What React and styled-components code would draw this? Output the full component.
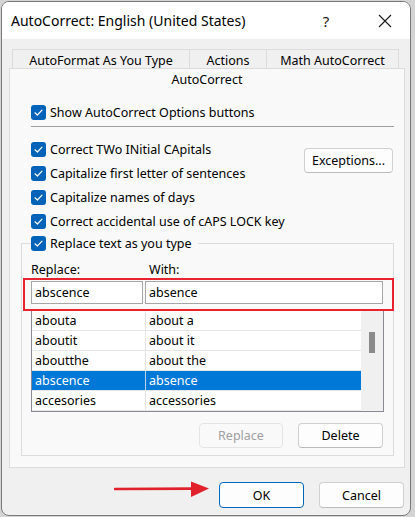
import React from 'react';
import styled, { createGlobalStyle } from 'styled-components';

const GlobalStyle = createGlobalStyle`
  html, body {
    margin: 0;
    padding: 0;
    background: #d4d4d4;
  }
  body {
    font-family: "Noto Sans", "Open Sans", sans-serif;
    font-size: 12.5px;
    color: #000;
  }
`;

const entries = [
  ['abouta', 'about a'],
  ['aboutit', 'about it'],
  ['aboutthe', 'about the'],
  ['abscence', 'absence', true],
  ['accesories', 'accessories'],
];

const options = [
  'Correct TWo INitial CApitals',
  'Capitalize first letter of sentences',
  'Capitalize names of days',
  'Correct accidental use of cAPS LOCK key',
];

const Check = ({ children }) => (
  <CheckRow>
    <Box>
      <svg width="11" height="11" viewBox="0 0 11 11" fill="none">
        <path d="M2 5.8 L4.4 8 L9 3.2" stroke="#fff" strokeWidth="1.2" strokeLinecap="round" strokeLinejoin="round" />
      </svg>
    </Box>
    <span>{children}</span>
  </CheckRow>
);

const App = () => {
  return (
    <>
      <GlobalStyle />
      <Window>
        <TitleBar>
          <Title>AutoCorrect: English (United States)</Title>
          <TitleButton>?</TitleButton>
          <TitleButton>
            <svg width="14" height="14" viewBox="0 0 14 14">
              <path d="M1 1 L13 13 M13 1 L1 13" stroke="#1a1a1a" strokeWidth="1.1" />
            </svg>
          </TitleButton>
        </TitleBar>

        <Body>
          <TabStrip>
            <Tab $w={178}>AutoFormat As You Type</Tab>
            <Tab $w={78}>Actions</Tab>
            <Tab $w={133}>Math AutoCorrect</Tab>
          </TabStrip>

          <Panel>
            <PanelHeader>AutoCorrect</PanelHeader>
            <PanelContent>
              <Check>Show AutoCorrect Options buttons</Check>
              <Separator />
              <OptionsRow>
                <div>
                  {options.map((o) => (
                    <Check key={o}>{o}</Check>
                  ))}
                </div>
                <Button $w={89} $mt={11}>Exceptions...</Button>
              </OptionsRow>

              <Group>
                <Legend>
                  <Check>Replace text as you type</Check>
                </Legend>
                <Labels>
                  <span>Replace:</span>
                  <span style={{ paddingLeft: 4 }}>With:</span>
                </Labels>
                <InputRow>
                  <Input>abscence</Input>
                  <Input>absence</Input>
                </InputRow>
                <List>
                  <Rows>
                    {entries.map(([a, b, sel]) => (
                      <Row key={a} $selected={sel}>
                        <Cell>{a}</Cell>
                        <Cell>{b}</Cell>
                      </Row>
                    ))}
                  </Rows>
                  <ScrollBar>
                    <Thumb />
                  </ScrollBar>
                </List>
                <GroupButtons>
                  <Button $w={84} disabled>Replace</Button>
                  <Button $w={85}>Delete</Button>
                </GroupButtons>
              </Group>
            </PanelContent>
          </Panel>

          <Footer>
            <Arrow width="96" height="20" viewBox="0 0 96 20">
              <path d="M1 9 L80 8.6" stroke="#e0202a" strokeWidth="2.6" strokeLinecap="round" />
              <path d="M77 1.5 L95 8.5 L77 17 Z" fill="#e0202a" />
            </Arrow>
            <Button $w={85} $h={26} $primary>OK</Button>
            <Button $w={85} $h={26}>Cancel</Button>
          </Footer>
        </Body>
      </Window>
    </>
  );
};

const Window = styled.div`
  box-sizing: border-box;
  margin: 1px 0 0 1px;
  width: 410px;
  height: 515px;
  border: 1px solid #7a7a7a;
  border-radius: 8px;
  overflow: hidden;
  background: #f0f0f0;
  display: flex;
  flex-direction: column;
`;

const TitleBar = styled.div`
  height: 37px;
  flex: none;
  background: #fff;
  display: flex;
  align-items: center;
  gap: 15px;
  padding: 0 3px 0 9px;
`;

const Title = styled.div`
  flex: 1;
  font-size: 14px;
  white-space: nowrap;
`;

const TitleButton = styled.div`
  width: 44px;
  height: 37px;
  display: flex;
  align-items: center;
  justify-content: center;
  font-size: 15px;
  color: #1a1a1a;
`;

const Body = styled.div`
  flex: 1;
  display: flex;
  flex-direction: column;
  padding-top: 10px;
`;

const TabStrip = styled.div`
  display: flex;
  margin-left: 10px;
`;

const Tab = styled.div`
  box-sizing: border-box;
  width: ${(p) => p.$w}px;
  height: 19px;
  border: 1px solid #dcdcdc;
  border-bottom: none;
  margin-right: -1px;
  display: flex;
  align-items: center;
  justify-content: center;
  padding-top: 2px;
  white-space: nowrap;
`;

const Panel = styled.div`
  box-sizing: border-box;
  margin-left: 7px;
  width: 396px;
  background: #f9f9f9;
  border: 1px solid #dcdcdc;
`;

const PanelHeader = styled.div`
  height: 20px;
  display: flex;
  align-items: center;
  justify-content: center;
`;

const PanelContent = styled.div`
  padding: 11px 10px 11px 21px;
`;

const CheckRow = styled.div`
  height: 24px;
  display: flex;
  align-items: center;
  gap: 4px;
  white-space: nowrap;
`;

const Box = styled.span`
  box-sizing: border-box;
  width: 15px;
  height: 15px;
  flex: none;
  border-radius: 3px;
  background: #0062b8;
  display: flex;
  align-items: center;
  justify-content: center;
`;

const Separator = styled.div`
  height: 1px;
  background: #a0a0a0;
  margin: 2px 0 10px;
`;

const OptionsRow = styled.div`
  display: flex;
  justify-content: space-between;
  align-items: flex-start;
`;

const Button = styled.button`
  box-sizing: border-box;
  width: ${(p) => p.$w}px;
  height: ${(p) => p.$h || 25}px;
  margin-top: ${(p) => p.$mt || 0}px;
  margin-right: 1px;
  font: inherit;
  color: #000;
  background: #fdfdfd;
  border: 1px solid ${(p) => (p.$primary ? '#0067c0' : '#d0d0d0')};
  border-bottom-color: ${(p) => (p.$primary ? '#0067c0' : '#bcbcbc')};
  border-radius: 4px;
  padding: 0;

  &:disabled {
    color: #a0a0a0;
    background: #f9f9f9;
    border-color: #e5e5e5;
  }
`;

const Group = styled.fieldset`
  margin: -2px 0 0 -10px;
  padding: 0 9px 7px 9px;
  border: 1px solid #dcdcdc;
  min-width: 0;
`;

const Legend = styled.legend`
  padding: 0 6px 0 0;
`;

const Labels = styled.div`
  display: grid;
  grid-template-columns: 114px 1fr;
  height: 16px;
  align-items: center;
  margin-top: 6px;
`;

const InputRow = styled.div`
  position: relative;
  display: grid;
  grid-template-columns: 112px 238px;
  gap: 2px;
  margin-top: 4px;

  &::after {
    content: '';
    position: absolute;
    top: -3px;
    bottom: -7px;
    left: -8px;
    right: -10px;
    border: 2px solid #e8222e;
    z-index: 2;
    pointer-events: none;
  }
`;

const Input = styled.div`
  box-sizing: border-box;
  height: 23px;
  background: #fff;
  border: 1px solid #a6a6a6;
  padding-left: 3px;
  display: flex;
  align-items: center;
`;

const List = styled.div`
  margin-top: 6px;
  display: flex;
  border: 1px solid #8a8a96;
  background: #fff;
`;

const Rows = styled.div`
  flex: 1;
`;

const Row = styled.div`
  box-sizing: border-box;
  height: 20px;
  display: grid;
  grid-template-columns: 114px 1fr;
  border-bottom: 1px solid #e6e6e6;
  background: ${(p) => (p.$selected ? '#0078d7' : '#fff')};
  color: ${(p) => (p.$selected ? '#fff' : '#000')};

  & > :first-child {
    border-right: 1px solid ${(p) => (p.$selected ? '#b8d4ee' : '#e6e6e6')};
  }
`;

const Cell = styled.div`
  display: flex;
  align-items: center;
  padding-left: 3px;
  white-space: nowrap;
`;

const ScrollBar = styled.div`
  width: 22px;
  background: #f0f0f0;
  display: flex;
  justify-content: center;
`;

const Thumb = styled.div`
  width: 6px;
  height: 21px;
  margin-top: 21px;
  background: #8b8b8b;
`;

const GroupButtons = styled.div`
  display: flex;
  justify-content: flex-end;
  gap: 14px;
  margin-top: 11px;
`;

const Footer = styled.div`
  display: flex;
  justify-content: flex-end;
  align-items: flex-start;
  gap: 14px;
  margin-top: 14px;
  padding-right: 5px;
`;

const Arrow = styled.svg`
  margin-top: -2px;
  margin-right: -5px;
`;

export default App;
